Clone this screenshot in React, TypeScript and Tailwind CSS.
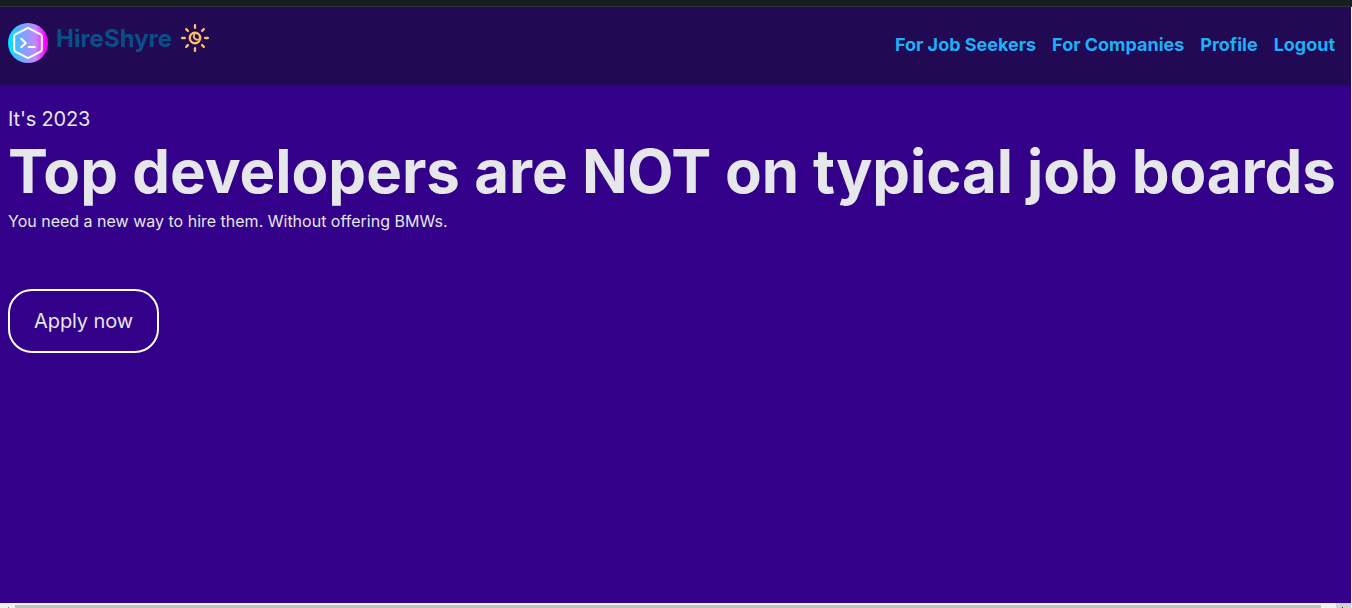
const links = ["For Job Seekers", "For Companies", "Profile", "Logout"];

function Logo() {
  return (
    <svg width="40" height="40" viewBox="0 0 40 40" fill="none" className="shrink-0">
      <defs>
        <linearGradient id="logo" x1="0" y1="0" x2="1" y2="0">
          <stop offset="0.04" stopColor="#00e1ff" />
          <stop offset="0.3" stopColor="#66aeff" />
          <stop offset="0.7" stopColor="#c585ff" />
          <stop offset="0.94" stopColor="#ff00fb" />
        </linearGradient>
      </defs>
      <circle cx="20" cy="20" r="20" fill="url(#logo)" />
      <g stroke="#fff" strokeWidth="2" strokeLinecap="round" strokeLinejoin="round">
        <path d="M19 5.3Q20 4.8 21 5.3L32.6 11.4Q33.8 12 33.8 13.3V26.7Q33.8 28 32.6 28.6L21 34.7Q20 35.2 19 34.7L7.4 28.6Q6.2 28 6.2 26.7V13.3Q6.2 12 7.4 11.4Z" />
        <path d="M13.2 15.8L17.8 20L13.2 24.2M20.8 24H26.8" />
      </g>
    </svg>
  );
}

function Sun() {
  return (
    <svg width="28" height="28" viewBox="0 0 28 28" fill="none" stroke="#ffbd66" strokeWidth="2.4" strokeLinecap="round" className="shrink-0">
      <circle cx="14" cy="14" r="5.2" />
      <path d="M13.3 10.5A3.4 3.4 0 0 0 17.3 15.5" strokeWidth="1.8" />
      <path d="M14 1.2V3.8M14 24.2V26.8M1.2 14H3.8M24.2 14H26.8M5.2 5.2L6.9 6.9M21.1 21.1L22.8 22.8M5.2 22.8L6.9 21.1M21.1 6.9L22.8 5.2" />
    </svg>
  );
}

export default function App() {
  return (
    <div className="flex h-[608px] w-[1352px] flex-col overflow-hidden bg-[#f1f1f1] font-['Inter',sans-serif]">
      <div className="h-[7px] shrink-0 border-b border-[#2e3436] bg-[#171e20]" />
      <div className="mr-px flex h-[596px] shrink-0 flex-col bg-[#320089] text-[#e5e7eb]">
        <header className="flex h-[78px] shrink-0 items-start justify-between bg-[#210953] px-2 pt-4">
          <div className="flex">
            <Logo />
            <span className="ml-2 text-2xl font-bold text-[#074f87]">HireShyre</span>
            <div className="ml-[9px] mt-px">
              <Sun />
            </div>
          </div>
          <nav className="mr-2 mt-2 flex gap-4 text-lg font-bold tracking-[-0.01px] text-[#1cb0f8]">
            {links.map((link) => (
              <a key={link} href="#">{link}</a>
            ))}
          </nav>
        </header>
        <main className="flex flex-col items-start px-2 pt-5">
          <p className="text-xl tracking-[-0.16px]">It's 2023</p>
          <h1 className="mt-2 whitespace-nowrap text-[60px] font-bold leading-[60px]">
            Top developers are <span className="tracking-[-0.4px]">NOT</span>
            <span className="tracking-[-0.09px]"> on typical job boards</span>
          </h1>
          <p className="mt-2 text-base">You need a new way to hire them. Without offering BMWs.</p>
          <button className="mt-14 h-16 w-[151px] rounded-3xl border-2 border-white text-xl tracking-[-0.12px]">Apply now</button>
        </main>
      </div>
      <div className="flex h-[5px] shrink-0 items-end bg-[#f1f1f1]">
        <div className="flex h-[3px] w-[15px] items-end pl-2">
          <div className="size-px bg-[#8b8b8b]" />
        </div>
        <div className="h-[3px] w-[1306px] bg-[#c1c1c1]" />
        <div className="ml-[15px] flex h-[5px] w-[15px] items-end bg-[#d2d2d2] pl-1.5">
          <div className="size-px bg-[#333333]" />
        </div>
      </div>
    </div>
  );
}
